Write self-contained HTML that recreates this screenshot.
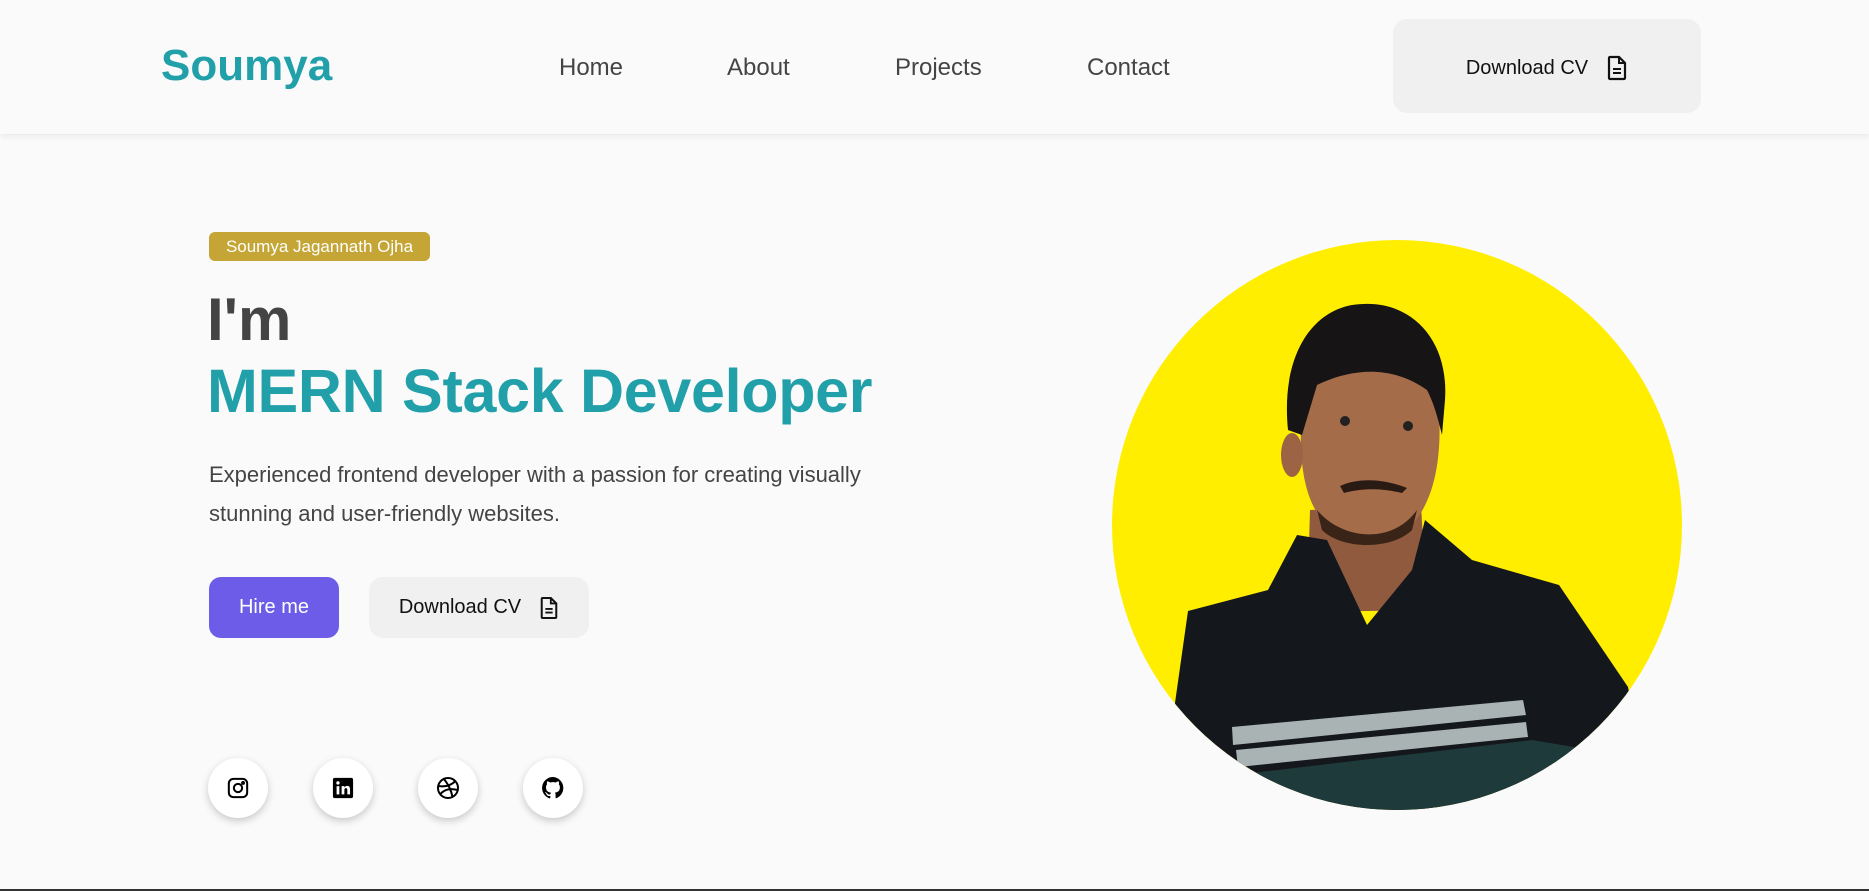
<!DOCTYPE html>
<html><head><meta charset="utf-8">
<style>
*{margin:0;padding:0;box-sizing:border-box}
html,body{width:1869px;height:891px;overflow:hidden;background:#fafafa;font-family:"Liberation Sans",Arial,sans-serif}
.hdr{position:absolute;left:0;top:0;width:1869px;height:134px;background:#fafafa;box-shadow:0 2px 6px rgba(0,0,0,.08)}
.logo{position:absolute;left:161px;top:41px;font-size:44px;font-weight:bold;color:#21a0aa}
.nav{position:absolute;top:54px;font-size:24px;color:#444}
.btn{position:absolute;background:#f0f0f0;border-radius:14px;display:flex;align-items:center;justify-content:center;color:#111}
.badge{position:absolute;left:209px;top:232px;width:221px;height:29px;background:#c4a535;border-radius:6px;color:#fff;font-size:17px;line-height:29px;text-align:center}
.im{position:absolute;left:207px;top:285px;font-size:60px;font-weight:bold;color:#444}
.mern{position:absolute;left:207px;top:356px;font-size:61px;font-weight:bold;color:#21a0aa;letter-spacing:-0.3px;white-space:nowrap}
.p{position:absolute;left:209px;top:455px;width:720px;font-size:22px;line-height:39px;color:#444}
.hire{position:absolute;left:209px;top:577px;width:130px;height:61px;background:#6c5ce7;border-radius:12px;color:#fff;font-size:20px;display:flex;align-items:center;justify-content:center}
.soc{position:absolute;top:758px;width:60px;height:60px;border-radius:50%;background:#fff;box-shadow:0 3px 8px rgba(0,0,0,.2);display:flex;align-items:center;justify-content:center}
.line{position:absolute;left:0;top:889px;width:1869px;height:2px;background:#333}
</style></head><body>
<div class="hdr">
<div class="logo">Soumya</div>
<div class="nav" style="left:559px">Home</div>
<div class="nav" style="left:727px">About</div>
<div class="nav" style="left:895px">Projects</div>
<div class="nav" style="left:1087px">Contact</div>
<div class="btn" style="left:1393px;top:19px;width:308px;height:94px;font-size:20px;padding-top:4px">Download CV
<svg width="22" height="26" viewBox="0 0 22 26" style="margin-left:18px"><path d="M4 2h9l6 6v15a1 1 0 0 1-1 1H4a1 1 0 0 1-1-1V3a1 1 0 0 1 1-1z" fill="none" stroke="#111" stroke-width="2.2"/><path d="M13 2v6h6M7 14h8M7 18h8" stroke="#111" stroke-width="2" fill="none"/></svg></div>
</div>
<div class="badge">Soumya Jagannath Ojha</div>
<div class="im">I'm</div>
<div class="mern">MERN Stack Developer</div>
<div class="p">Experienced frontend developer with a passion for creating visually stunning and user-friendly websites.</div>
<div class="hire">Hire me</div>
<div class="btn" style="left:369px;top:577px;width:220px;height:61px;font-size:20px">Download CV
<svg width="20" height="24" viewBox="0 0 22 26" style="margin-left:18px"><path d="M4 2h9l6 6v15a1 1 0 0 1-1 1H4a1 1 0 0 1-1-1V3a1 1 0 0 1 1-1z" fill="none" stroke="#111" stroke-width="2.2"/><path d="M13 2v6h6M7 14h8M7 18h8" stroke="#111" stroke-width="2" fill="none"/></svg></div>
<div class="soc" style="left:208px"><svg width="22" height="22" viewBox="0 0 24 24" fill="none" stroke="#000" stroke-width="2.2"><rect x="2" y="2" width="20" height="20" rx="5"/><circle cx="12" cy="12" r="4.5"/><circle cx="17.5" cy="6.5" r="1" fill="#000"/></svg></div>
<div class="soc" style="left:313px"><svg width="22" height="22" viewBox="0 0 24 24"><rect x="1" y="1" width="22" height="22" rx="2" fill="#000"/><rect x="5" y="10" width="3" height="9" fill="#fff"/><circle cx="6.5" cy="6.5" r="1.8" fill="#fff"/><path d="M10.5 10h3v1.5c.8-1.300 2-1.8 3.2-1.8 2.2 0 3 1.5 3 4V19h-3v-4.8c0-1.2-.4-2-1.500-2s-1.7.8-1.7 2V19h-3z" fill="#fff"/></svg></div>
<div class="soc" style="left:418px"><svg width="24" height="24" viewBox="0 0 24 24" fill="none" stroke="#000" stroke-width="2"><circle cx="12" cy="12" r="10"/><path d="M8 3c4 5 7 10 8.5 18M2.5 10c6 1 12 0 17-5M4 18.5c4-5 10-6.5 17.5-4.5"/></svg></div>
<div class="soc" style="left:523px"><svg width="24" height="24" viewBox="0 0 24 24"><path fill="#000" d="M12 1a11 11 0 0 0-3.5 21.4c.6.1.8-.2.8-.5v-2c-3.1.7-3.7-1.4-3.7-1.4-.5-1.3-1.2-1.6-1.2-1.6-1-.7.1-.7.1-.7 1.1.1 1.700 1.1 1.7 1.1 1 1.7 2.6 1.2 3.2.9.1-.7.4-1.2.7-1.500-2.5-.3-5.1-1.2-5.1-5.4 0-1.2.4-2.2 1.1-3-.1-.3-.5-1.4.1-2.9 0 0 .9-.3 3 1.1a10.5 10.5 0 0 1 5.5 0c2.1-1.4 3-1.1 3-1.1.6 1.5.2 2.6.1 2.9.7.8 1.1 1.8 1.1 3 0 4.2-2.6 5.1-5.1 5.4.4.3.8 1 .8 2v3c0 .3.2.6.8.5A11 11 0 0 0 12 1z"/></svg></div>
<svg style="position:absolute;left:1112px;top:240px" width="570" height="570" viewBox="0 0 570 570">
<defs><clipPath id="c"><circle cx="285" cy="285" r="285"/></clipPath></defs>
<circle cx="285" cy="285" r="285" fill="#ffee00"/>
<g clip-path="url(#c)">
<path d="M198 270 L309 265 L315 370 L195 372z" fill="#8f5a3e"/>
<path d="M62 470 L76 371 L156 350 L185 295 L215 300 L255 385 L300 330 L313 280 L360 320 L447 345 L516 447 L540 570 L40 570z" fill="#14171b"/>
<path d="M120 487 L411 460 L414 475 L121 505z M124 510 L414 482 L416 497 L126 527z" fill="#a9b3b3"/>
<path d="M80 540 L420 500 L540 520 L540 570 L60 570z" fill="#1f3a3a"/>
<path d="M190 170 C185 230 195 280 230 295 C250 305 280 300 300 285 C322 260 330 220 327 170 C320 140 290 130 258 130 C220 130 195 140 190 170z" fill="#a56c4a"/>
<ellipse cx="180" cy="215" rx="11" ry="22" fill="#9c6444"/>
<path d="M176 190 C168 110 205 64 252 64 C300 62 337 100 333 160 L330 195 C324 170 320 160 315 150 C280 125 240 128 205 145 L190 195z" fill="#161414"/>
<path d="M228 246 C245 238 270 238 295 248 L290 253 C270 248 250 248 232 253z" fill="#2a1a14"/>
<path d="M205 270 C230 300 280 305 305 270 L300 290 C280 310 230 310 210 290z" fill="#3a2418"/>
<circle cx="233" cy="181" r="5" fill="#222"/><circle cx="296" cy="186" r="5" fill="#222"/>
</g>
</svg>
<div class="line"></div>
</body></html>
